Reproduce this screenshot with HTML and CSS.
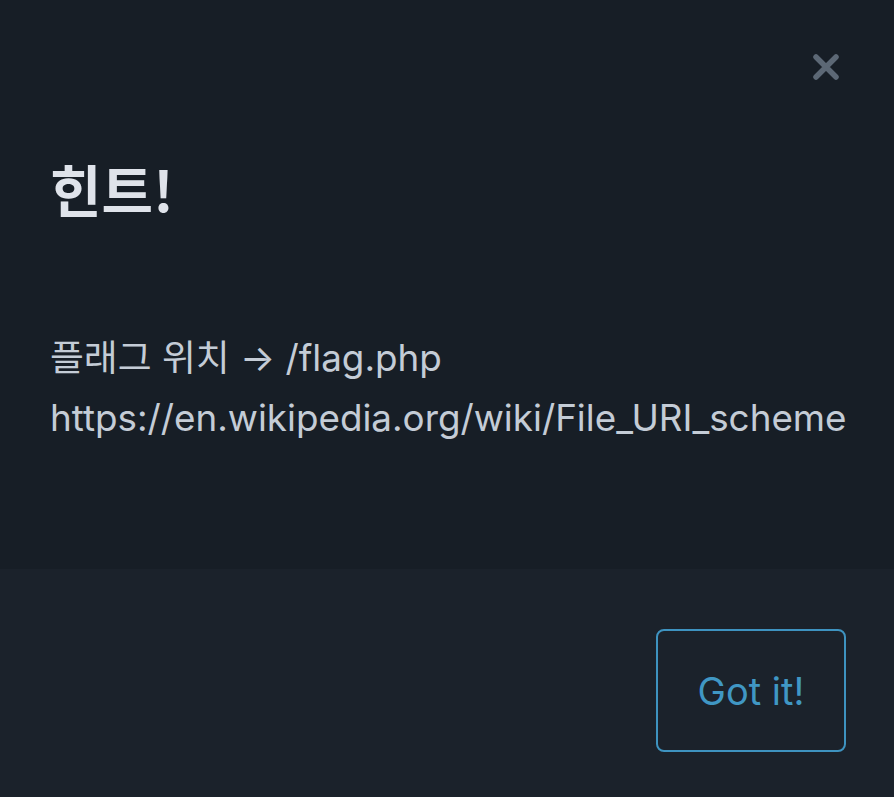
FILE: index.html
```html
<!DOCTYPE html>
<html lang="ko">
<head>
<meta charset="utf-8">
<link rel="stylesheet" href="styles.css">
</head>
<body>
<div class="modal">
  <div class="modal-main">
    <div class="close-row">
      <button class="close" aria-label="Close">
        <svg width="30" height="30" viewBox="0 0 30 30"><path d="M5 5 L25 25 M25 5 L5 25" stroke="#5c6875" stroke-width="5.5" stroke-linecap="round"/></svg>
      </button>
    </div>
    <h1 class="title">힌트!</h1>
    <div class="content">
      <p class="line">플래그 위치 → /flag.php</p>
      <p class="line">https://en.wikipedia.org/wiki/File_URI_scheme</p>
    </div>
  </div>
  <div class="modal-footer">
    <button class="got">Got it!</button>
  </div>
</div>
</body>
</html>
```
FILE: styles.css
```css
html, body { margin: 0; padding: 0; }
body {
  background: #171e26;
  font-family: Inter, "Noto Sans CJK KR", sans-serif;
  width: 894px;
  height: 797px;
  overflow: hidden;
}
.modal { display: flex; flex-direction: column; height: 797px; }
.modal-main {
  height: 569px;
  box-sizing: border-box;
  padding: 52px 48px 0 50px;
  background: #171e26;
}
.close-row { display: flex; justify-content: flex-end; }
.close {
  background: none; border: 0; padding: 0; margin-right: 5px;
  width: 30px; height: 30px; display: flex;
}
.title {
  margin: 66px 0 0 0;
  font-family: "Noto Sans CJK KR", sans-serif;
  font-size: 56px;
  font-weight: 700;
  line-height: 80px;
  color: #dfe3ea;
}
.content { margin-top: 100px; }
.line {
  margin: 0;
  font-size: 36.8px;
  line-height: 60px;
  color: #c4ccd6;
  font-family: Inter, "Noto Sans CJK KR", sans-serif;
}
.modal-footer {
  flex: 1;
  background: #1b222b;
  display: flex;
  justify-content: flex-end;
  align-items: flex-start;
  padding: 60px 48px 0 0;
}
.got {
  width: 190px; height: 123px;
  box-sizing: border-box;
  background: transparent;
  border: 2px solid #3e93c0;
  border-radius: 8px;
  color: #4097c4;
  font-family: Inter, sans-serif;
  font-size: 38px;
}
```
